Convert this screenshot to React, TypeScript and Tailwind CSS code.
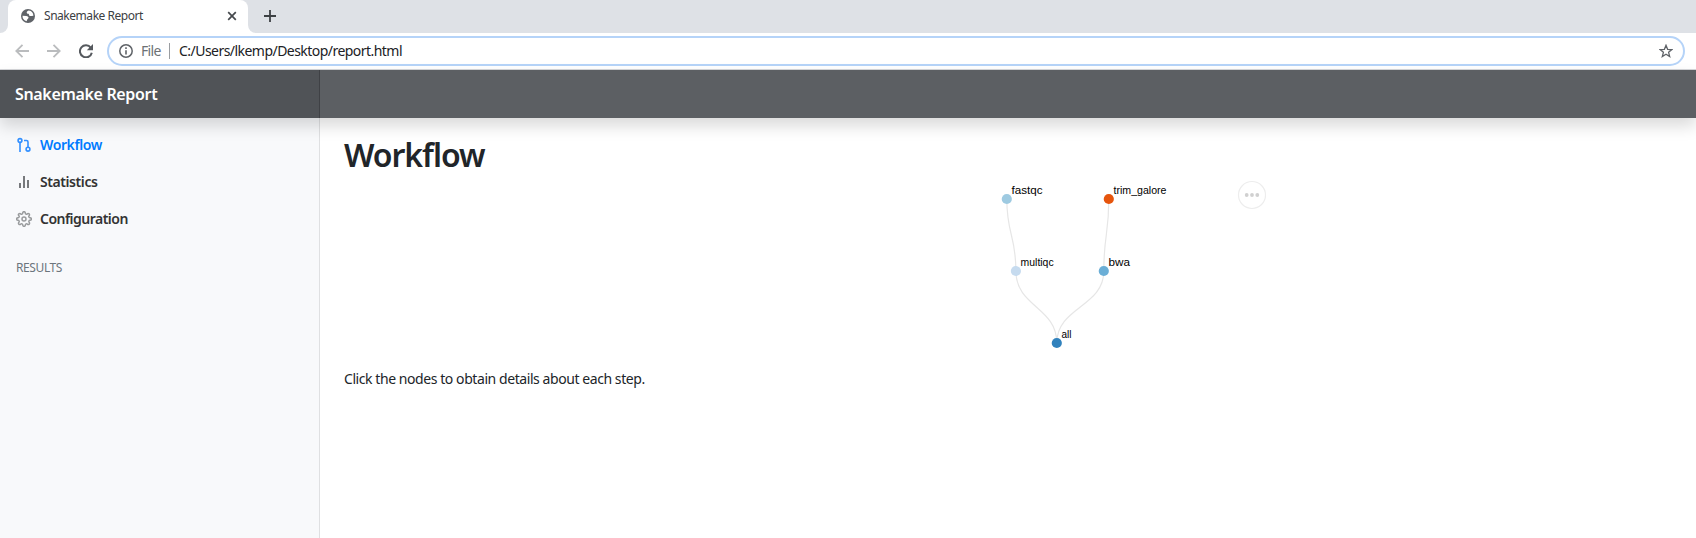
import React from "react";

const nodes = [
  { name: "fastqc", x: 1006.8, y: 199, color: "#9ecae1", width: 31 },
  { name: "trim_galore", x: 1108.8, y: 199, color: "#e6550d", width: 53 },
  { name: "multiqc", x: 1015.9, y: 271, color: "#c6dbef", width: 33 },
  { name: "bwa", x: 1103.8, y: 271, color: "#6baed6", width: 21.5 },
  { name: "all", x: 1056.8, y: 343, color: "#3182bd", width: 10 },
];

const edges = [
  [0, 2],
  [1, 3],
  [2, 4],
  [3, 4],
];

function TabStrip() {
  return (
    <div className="flex h-[33px] bg-[#dee1e6] text-[#3c4043]">
      <div className="flex w-2 items-end bg-white">
        <div className="h-full w-2 rounded-br-[8px] bg-[#dee1e6]" />
      </div>
      <div className="w-[240px] bg-[#dee1e6]">
        <div className="flex h-full items-center rounded-t-[8px] bg-white pr-[11px] pb-px pl-[13px]">
          <svg className="size-[14px] shrink-0" viewBox="0 0 14 14">
            <circle cx="7" cy="7" r="7" fill="#5f6368" />
            <path
              d="M7.800 1.600C6 2.300 5.200 3.500 6 4.300s2 .2 2 1.500 1.300 1.500 2.600 1.200l1.800-.2A5.500 5.500 0 0 0 7.800 1.600zM1.500 6.800l3.700.2c1.500.1 2.600 1 2.300 2s-1.800 1-1.700 3.300A5.600 5.600 0 0 1 1.500 6.800z"
              fill="#fff"
            />
          </svg>
          <span className="mb-px ml-[9px] text-[12px] leading-4 tracking-[-0.46px] whitespace-nowrap">
            Snakemake Report
          </span>
          <svg className="ml-auto size-[10px] shrink-0" viewBox="0 0 10 10">
            <path d="M1.200 1.200l7.600 7.600M8.800 1.200l-7.600 7.600" stroke="#45494d" strokeWidth="1.700" />
          </svg>
        </div>
      </div>
      <div className="w-2 bg-white">
        <div className="h-full rounded-bl-[8px] bg-[#dee1e6]" />
      </div>
      <svg className="mt-[10px] ml-2 size-3" viewBox="0 0 12 12">
        <path d="M6 0v12M0 6h12" stroke="#3c4043" strokeWidth="1.800" />
      </svg>
    </div>
  );
}

function Toolbar() {
  return (
    <div className="flex h-[37px] border-b border-[#d5d6d9] bg-white pt-[3px] pl-[15px]">
      <svg className="mt-2 size-[14px]" viewBox="0 0 14 14" fill="none" stroke="#babcbe" strokeWidth="1.800">
        <path d="M14 7H1.500M7.500 .8L1.300 7l6.200 6.200" />
      </svg>
      <svg className="mt-2 ml-[18px] size-[14px]" viewBox="0 0 14 14" fill="none" stroke="#babcbe" strokeWidth="1.800">
        <path d="M0 7h12.500M6.500 .8L12.700 7l-6.200 6.200" />
      </svg>
      <svg className="mt-2 ml-[18px] size-[14px]" viewBox="0 0 14 14">
        <path d="M11.800 3.800A6 6 0 1 0 12.800 8.700" fill="none" stroke="#55595e" strokeWidth="2" />
        <path d="M14 0v6.200H7.800z" fill="#55595e" />
      </svg>
      <div className="ml-[14px] flex h-[30px] w-[1578px] items-center rounded-full border-2 border-[#b5d3f8] bg-white pr-[10px] pl-[10px] text-[14px]">
        <svg className="size-[14px]" viewBox="0 0 14 14">
          <circle cx="7" cy="7" r="6.200" fill="none" stroke="#5f6368" strokeWidth="1.500" />
          <path d="M7 6.200v4.300M7 3.300v1.600" stroke="#5f6368" strokeWidth="1.600" />
        </svg>
        <span className="ml-[8px] w-[28px] text-[14px] leading-5 tracking-[-0.7px] text-[#6d7175]">File</span>
        <span className="h-4 w-px bg-[#9a9da1]" />
        <span className="ml-[9px] leading-5 tracking-[-0.54px] whitespace-nowrap text-[#202124]">
          C:/Users/lkemp/Desktop/report.html
        </span>
        <svg className="ml-auto size-[14px]" viewBox="0 0 14 14">
          <path
            d="M7 1.300l1.600 4 4.300.300-3.300 2.700 1.100 4.200L7 10.200l-3.700 2.300 1.100-4.200L1.100 5.600l4.300-.3z"
            fill="none"
            stroke="#5f6368"
            strokeWidth="1.300"
          />
        </svg>
      </div>
    </div>
  );
}

function PullRequestIcon() {
  return (
    <svg className="size-4" viewBox="0 0 16 16" fill="none" stroke="#3390ff" strokeWidth="1.600">
      <circle cx="4" cy="3.500" r="1.900" />
      <path d="M4 5.300V15M8 3.500h2.500Q12 3.500 12 5v5.300" />
      <circle cx="12" cy="12.200" r="1.900" />
    </svg>
  );
}

function BarsIcon() {
  return (
    <svg className="size-4" viewBox="0 0 16 16" fill="none" stroke="#77797c" strokeWidth="2">
      <path d="M4 14V9M8 14V2M12 14V6" />
    </svg>
  );
}

function GearIcon() {
  return (
    <svg className="size-4" viewBox="0 0 24 24" fill="none" stroke="#999b9d" strokeWidth="2.200">
      <circle cx="12" cy="12" r="3" />
      <path d="M19.400 15a1.650 1.650 0 0 0 .33 1.820l.06.06a2 2 0 1 1-2.830 2.830l-.06-.06a1.650 1.650 0 0 0-2.820 1.170V21a2 2 0 0 1-4 0v-.09a1.650 1.650 0 0 0-2.900-1.260l-.06.06a2 2 0 1 1-2.830-2.830l.06-.06A1.650 1.650 0 0 0 3.090 14H3a2 2 0 0 1 0-4h.09a1.650 1.650 0 0 0 1.260-2.820l-.06-.06a2 2 0 1 1 2.830-2.830l.06.06A1.650 1.650 0 0 0 10 3.090V3a2 2 0 0 1 4 0v.09a1.650 1.650 0 0 0 2.820 1.260l.06-.06a2 2 0 1 1 2.830 2.830l-.06.06A1.650 1.650 0 0 0 20.910 10H21a2 2 0 0 1 0 4h-.09a1.650 1.650 0 0 0-1.510 1z" />
    </svg>
  );
}

function Sidebar() {
  return (
    <aside className="w-[320px] border-r border-[#dfe0e2] bg-[#f8f9fb] pt-[8px] pl-4 text-[14px] leading-[21px] font-semibold text-[#333]">
      <div className="flex h-[37px] items-center gap-2 text-[#007bff]">
        <PullRequestIcon />
        <span className="tracking-[-0.4px]">Workflow</span>
      </div>
      <div className="flex h-[37px] items-center gap-2">
        <BarsIcon />
        <span className="tracking-[-0.42px]">Statistics</span>
      </div>
      <div className="flex h-[37px] items-center gap-2">
        <GearIcon />
        <span className="tracking-[-0.52px]">Configuration</span>
      </div>
      <h6 className="mt-[23px] text-[12px] leading-[15px] font-normal tracking-[-0.4px] text-[#6c757d]">RESULTS</h6>
    </aside>
  );
}

function Graph() {
  return (
    <svg className="h-[180px] w-[320px]" viewBox="980 178 320 180">
      {edges.map(([a, b]) => {
        const s = nodes[a];
        const t = nodes[b];
        const mid = (s.y + t.y) / 2;
        return (
          <path
            key={s.name}
            d={`M${s.x},${s.y}C${s.x},${mid} ${t.x},${mid} ${t.x},${t.y}`}
            fill="none"
            stroke="#e6e6e6"
            strokeWidth="1.200"
          />
        );
      })}
      {nodes.map((n) => (
        <g key={n.name}>
          <circle cx={n.x} cy={n.y} r="5.100" fill={n.color} />
          <text
            x={n.x + 4.700}
            y={n.y - 5}
            textLength={n.width}
            lengthAdjust="spacingAndGlyphs"
            className="font-['Liberation_Sans',sans-serif] text-[11px]"
            fill="#000"
          >
            {n.name}
          </text>
        </g>
      ))}
      <circle cx="1252" cy="195" r="13.500" fill="#fff" stroke="#ededed" strokeWidth="1.200" />
      <circle cx="1246.700" cy="195" r="1.900" fill="#d0d0d0" />
      <circle cx="1252" cy="195" r="1.900" fill="#d0d0d0" />
      <circle cx="1257.300" cy="195" r="1.900" fill="#d0d0d0" />
    </svg>
  );
}

export default function App() {
  return (
    <div className="flex h-[538px] w-[1696px] flex-col overflow-hidden bg-white font-['Noto_Sans','Open_Sans',sans-serif]">
      <TabStrip />
      <Toolbar />
      <header className="z-10 flex h-12 shrink-0 bg-[#5c5f63] shadow-[0_8px_16px_rgba(0,0,0,0.15)]">
        <div className="flex w-[320px] items-center border-r border-[#3f4145] bg-[#505357] pl-[15px] text-[16px] font-semibold whitespace-nowrap text-white">
          <span className="tracking-[-0.34px]">Snakemake Report</span>
        </div>
      </header>
      <div className="flex flex-1">
        <Sidebar />
        <main className="flex flex-1 flex-col pl-6 text-[#212529]">
          <h1 className="mt-[17px] h-[43px] text-[32px] leading-[39px] font-semibold">
            <span className="tracking-[-1.05px]">Workflow</span>
          </h1>
          <div className="flex h-[180px] pl-[636px]">
            <Graph />
          </div>
          <p className="mt-[10px] text-[14px] leading-[21px]">
            <span className="tracking-[-0.43px]">Click the nodes to obtain details about each step.</span>
          </p>
        </main>
      </div>
    </div>
  );
}
